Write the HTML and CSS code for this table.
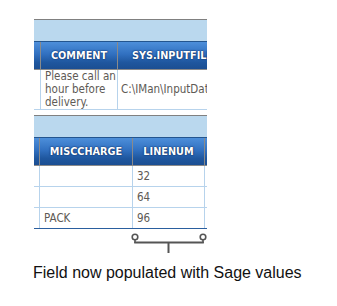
FILE: index.html
```html
<!DOCTYPE html>
<html>
<head>
<meta charset="utf-8">
<link rel="stylesheet" href="styles.css">
</head>
<body>
<div class="page">
  <div class="panel">
    <div class="band"></div>
    <div class="grid grid-top head">
      <div class="cell"></div>
      <div class="cell">COMMENT</div>
      <div class="cell">SYS.INPUTFILE</div>
      <div class="cell"></div>
    </div>
    <div class="grid grid-top row row-tall">
      <div class="cell"></div>
      <div class="cell">Please call an hour before delivery.</div>
      <div class="cell mid">C:\IMan\InputData</div>
      <div class="cell"></div>
    </div>
  </div>

  <div class="panel panel-second">
    <div class="band"></div>
    <div class="grid grid-bot head">
      <div class="cell"></div>
      <div class="cell">MISCCHARGE</div>
      <div class="cell">LINENUM</div>
      <div class="cell"></div>
    </div>
    <div class="grid grid-bot row">
      <div class="cell"></div>
      <div class="cell"></div>
      <div class="cell">32</div>
      <div class="cell"></div>
    </div>
    <div class="grid grid-bot row">
      <div class="cell"></div>
      <div class="cell"></div>
      <div class="cell">64</div>
      <div class="cell"></div>
    </div>
    <div class="grid grid-bot row row-last">
      <div class="cell"></div>
      <div class="cell">PACK</div>
      <div class="cell">96</div>
      <div class="cell"></div>
    </div>
  </div>

  <svg class="bracket" width="337" height="26" viewBox="0 0 337 26">
    <line x1="135" y1="10.5" x2="135" y2="14" stroke="#555" stroke-width="1.6"/>
    <line x1="203" y1="10.5" x2="203" y2="14" stroke="#555" stroke-width="1.6"/>
    <line x1="134.2" y1="13.5" x2="203.8" y2="13.5" stroke="#555" stroke-width="2"/>
    <line x1="168.5" y1="13.5" x2="168.5" y2="24" stroke="#555" stroke-width="2"/>
    <circle cx="135" cy="8" r="2.8" fill="#fff" stroke="#555" stroke-width="1.6"/>
    <circle cx="203" cy="8" r="2.8" fill="#fff" stroke="#555" stroke-width="1.6"/>
  </svg>

  <p class="caption">Field now populated with Sage values</p>
</div>
</body>
</html>
```

FILE: styles.css
```css
html, body {
  margin: 0;
  padding: 0;
  background: #ffffff;
}

.page {
  padding-top: 19px;
  width: 337px;
}

.panel {
  margin-left: 34px;
  width: 173px;
  overflow: hidden;
}

.panel-second {
  margin-top: 5px;
}

.band {
  height: 21px;
  background: #bad8ee;
  border-top: 1px solid #808080;
  border-bottom: 1px solid #23558f;
}

.grid {
  display: grid;
  width: 400px;
}

.grid-top {
  grid-template-columns: 7px 77px 110px 206px;
}

.grid-bot {
  grid-template-columns: 6px 93px 72px 229px;
}

.cell {
  box-sizing: border-box;
  white-space: nowrap;
  overflow: hidden;
}

.head {
  height: 28px;
  background: linear-gradient(#4d8fda 0%, #3170c0 45%, #1f579f 75%, #1b4e92 100%);
  border-bottom: 1px solid #8a8a8a;
  box-sizing: border-box;
}

.head .cell {
  border-right: 1px solid #8a8a8a;
  color: #ffffff;
  font-family: "DejaVu Sans", sans-serif;
  font-stretch: condensed;
  font-weight: bold;
  font-size: 10.8px;
  line-height: 27px;
  text-align: center;
  text-shadow: 0 0 2px #0c2c60, 0 0 1px #0c2c60;
}

.row {
  height: 21px;
  box-sizing: border-box;
  border-bottom: 1px solid #b7d3ec;
}

.row-tall {
  height: 40px;
}

.row-last {
  border-bottom: 1px solid #2a5e9e;
}

.row .cell {
  border-right: 1px solid #b7d3ec;
  color: #5e5a55;
  font-family: "DejaVu Sans", sans-serif;
  font-stretch: condensed;
  font-size: 11.5px;
  line-height: 20px;
  padding-left: 4px;
}

.row-tall .cell {
  white-space: normal;
  line-height: 13px;
  padding-top: 0;
}

.row-tall .mid {
  white-space: nowrap;
  line-height: 39px;
  padding-left: 3px;
}

.bracket {
  display: block;
}

.caption {
  margin: 9px 0 0 33px;
  font-family: "Liberation Sans", Arial, sans-serif;
  font-size: 16px;
  line-height: 18px;
  color: #111111;
}
```
